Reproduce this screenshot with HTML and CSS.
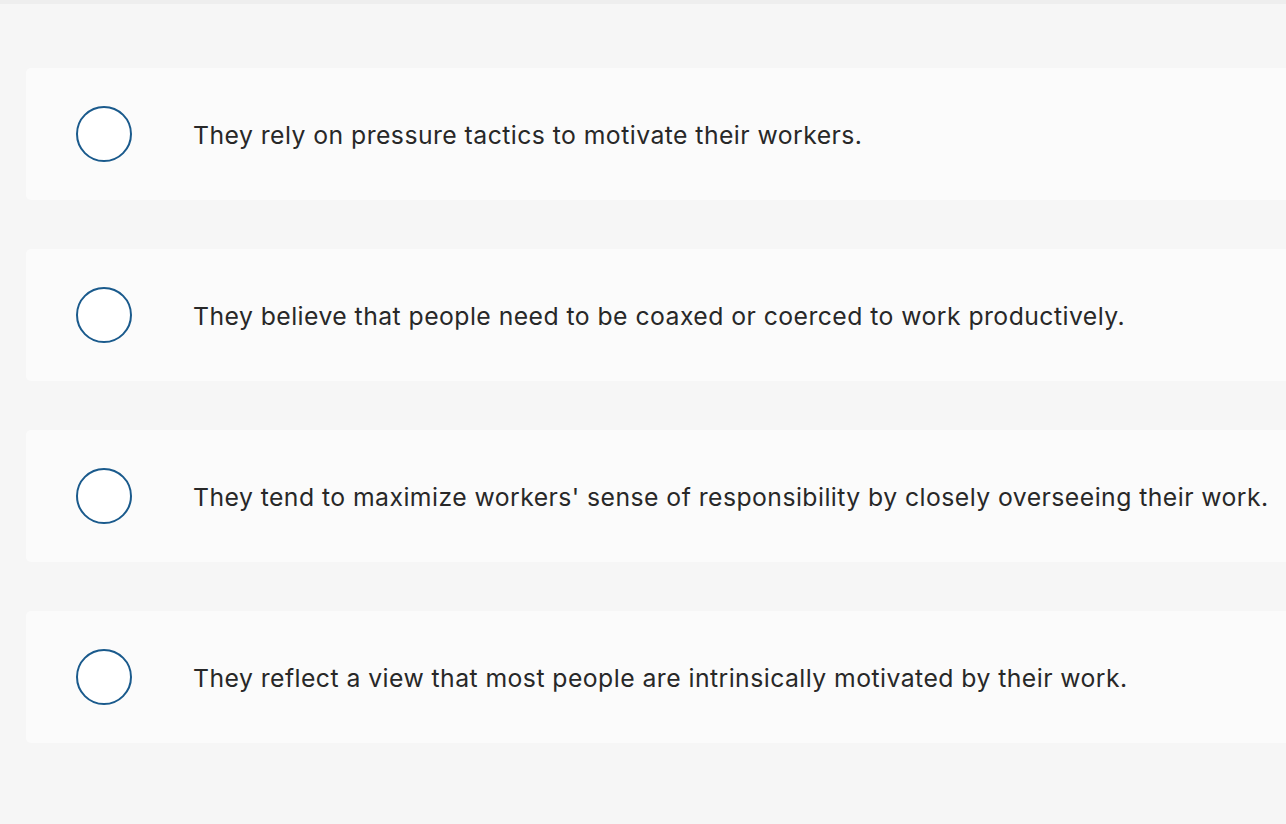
FILE: index.html
```html
<!DOCTYPE html>
<html>
<head>
<meta charset="utf-8">
<link rel="stylesheet" href="styles.css">
</head>
<body>
<div class="topbar"></div>
<main class="list">
  <div class="option"><span class="radio"></span><span class="label">They rely on pressure tactics to motivate their workers.</span></div>
  <div class="option"><span class="radio"></span><span class="label">They believe that people need to be coaxed or coerced to work productively.</span></div>
  <div class="option"><span class="radio"></span><span class="label">They tend to maximize workers' sense of responsibility by closely overseeing their work.</span></div>
  <div class="option"><span class="radio"></span><span class="label">They reflect a view that most people are intrinsically motivated by their work.</span></div>
</main>
</body>
</html>
```
FILE: styles.css
```css
html, body {
  margin: 0;
  padding: 0;
  background: #f6f6f6;
  overflow: hidden;
  height: 100%;
}
body {
  font-family: "Inter", "Liberation Sans", sans-serif;
  color: #282828;
}
.topbar {
  height: 4px;
  background: #eeeeee;
}
.list {
  display: flex;
  flex-direction: column;
  gap: 49px;
  padding: 64px 0 0 26px;
}
.option {
  width: 1320px;
  height: 132px;
  background: #fbfbfb;
  border-radius: 5px;
  display: flex;
  align-items: center;
  padding-left: 50px;
  box-sizing: border-box;
}
.radio {
  width: 56px;
  height: 56px;
  border: 2px solid #1a5a8c;
  border-radius: 50%;
  background: #ffffff;
  box-sizing: border-box;
  flex: none;
}
.label {
  margin-left: 61px;
  padding-top: 2px;
  font-size: 24.75px;
  letter-spacing: 0.45px;
  line-height: 30px;
  white-space: nowrap;
}
```
